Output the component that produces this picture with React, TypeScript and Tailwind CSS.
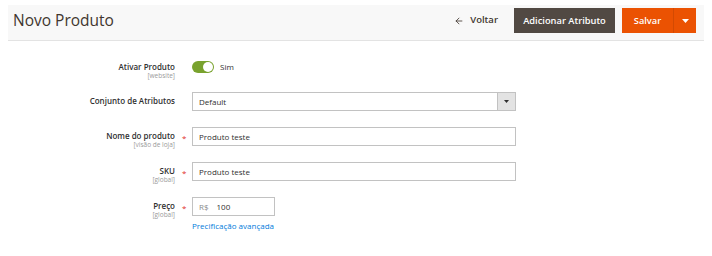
import { ArrowLeft } from 'lucide-react';

function Label({ text, scope, required }: { text: string; scope?: string; required?: boolean }) {
  return (
    <>
      <div className="w-[167px] text-right pt-[3px]">
        <div className="text-[8px] font-semibold text-[#303030] leading-[11px]">{text}</div>
        {scope && <div className="text-[6.5px] text-[#9a9a9a] leading-[8px]">{scope}</div>}
      </div>
      <div className="w-[17px] pl-[7px] pt-[5px] text-[8px] leading-[11px] text-[#e02b27]">{required ? '*' : ''}</div>
    </>
  );
}

function TextInput({ value, width }: { value: string; width: string }) {
  return (
    <div className={`${width} h-[19px] border border-[#c2c2c2] bg-white flex items-center px-[6px] text-[8px] text-[#303030]`}>
      {value}
    </div>
  );
}

export default function App() {
  return (
    <div className="w-[712px] h-[256px] bg-white pt-[5px] px-[8px]" style={{ fontFamily: '"Open Sans", sans-serif' }}>
      {/* page header */}
      <div className="h-[36px] bg-[#f8f8f8] border-b border-[#e3e3e3] flex items-start pt-[3px] pl-[5px] pr-[8px]">
        <h1 className="text-[15.5px] text-[#41362f] font-normal flex-1 leading-[25px]">Novo Produto</h1>
        <button className="h-[25px] flex items-center gap-[6px] text-[9.5px] font-semibold text-[#41362f] mr-[16px]">
          <ArrowLeft size={10} strokeWidth={2} />
          Voltar
        </button>
        <button className="h-[25px] w-[101px] bg-[#514943] text-white text-[9.3px] font-semibold mr-[7px]">
          Adicionar Atributo
        </button>
        <div className="h-[25px] flex bg-[#eb5202] text-white">
          <button className="w-[52px] text-[9.3px] font-semibold border-r border-[#d34a02]">Salvar</button>
          <button className="w-[22px] flex items-center justify-center">
            <svg width="7" height="4" viewBox="0 0 7 4"><path d="M0 0h7L3.5 4z" fill="white" /></svg>
          </button>
        </div>
      </div>

      {/* form */}
      <div className="flex flex-col pt-[17px]">
        <div className="flex items-start h-[34px]">
          <Label text="Ativar Produto" scope="[website]" />
          <div className="flex items-center gap-[6px] pt-[3px]">
            <div className="w-[22px] h-[12px] rounded-full bg-[#79a22e] relative">
              <div className="absolute right-[1px] top-[1px] w-[10px] h-[10px] rounded-full bg-white" />
            </div>
            <span className="text-[8px] text-[#303030]">Sim</span>
          </div>
        </div>

        <div className="flex items-start h-[19px]">
          <Label text="Conjunto de Atributos" />
          <div className="w-[324px] h-[19px] border border-[#c2c2c2] flex">
            <div className="flex-1 flex items-center px-[6px] text-[8px] text-[#303030]">Default</div>
            <div className="w-[18px] bg-[#e3e3e3] border-l border-[#c2c2c2] flex items-center justify-center">
              <svg width="5" height="3" viewBox="0 0 5 3"><path d="M0 0h5L2.5 3z" fill="#303030" /></svg>
            </div>
          </div>
        </div>

        <div className="flex items-start h-[19px] mt-[16px]">
          <Label text="Nome do produto" scope="[visão de loja]" required />
          <TextInput value="Produto teste" width="w-[324px]" />
        </div>

        <div className="flex items-start h-[19px] mt-[16px]">
          <Label text="SKU" scope="[global]" required />
          <TextInput value="Produto teste" width="w-[324px]" />
        </div>

        <div className="flex items-start mt-[16px]">
          <Label text="Preço" scope="[global]" required />
          <div className="flex flex-col">
            <div className="w-[83px] h-[19px] border border-[#c2c2c2] flex items-center px-[6px] text-[8px] text-[#303030]">
              <span className="text-[#8a8a8a] mr-[8px]">R$</span>100
            </div>
            <a className="text-[8px] text-[#007bdb] mt-[4px]">Precificação avançada</a>
          </div>
        </div>
      </div>
    </div>
  );
}
